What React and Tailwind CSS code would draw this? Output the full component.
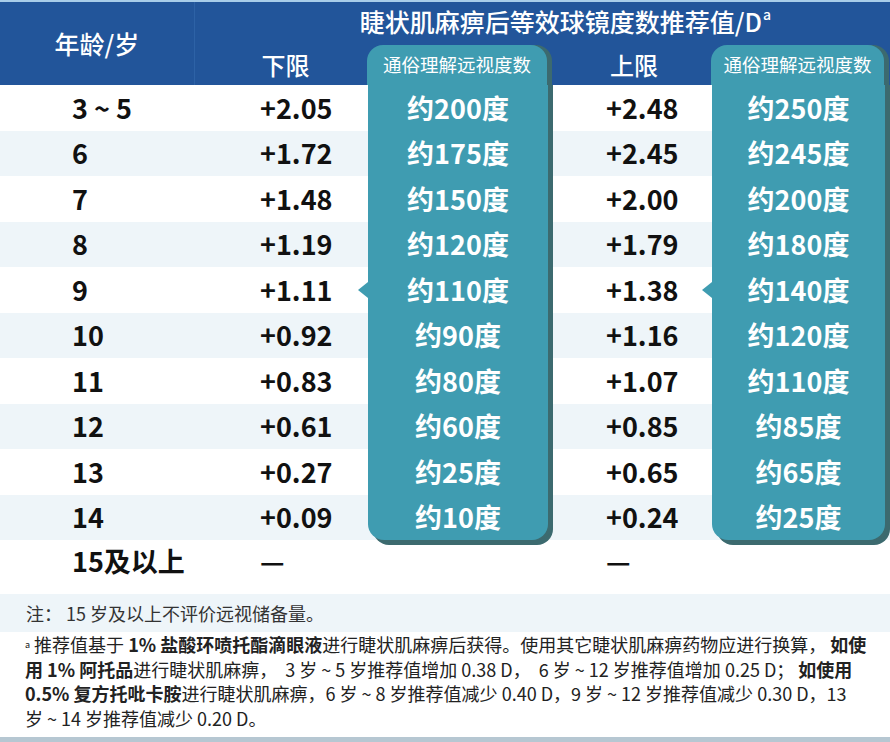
import React from 'react';

const ROWS = [
  ['3 ~ 5', '+2.05', '约200度', '+2.48', '约250度'],
  ['6', '+1.72', '约175度', '+2.45', '约245度'],
  ['7', '+1.48', '约150度', '+2.00', '约200度'],
  ['8', '+1.19', '约120度', '+1.79', '约180度'],
  ['9', '+1.11', '约110度', '+1.38', '约140度'],
  ['10', '+0.92', '约90度', '+1.16', '约120度'],
  ['11', '+0.83', '约80度', '+1.07', '约110度'],
  ['12', '+0.61', '约60度', '+0.85', '约85度'],
  ['13', '+0.27', '约25度', '+0.65', '约65度'],
  ['14', '+0.09', '约10度', '+0.24', '约25度'],
];

function BoxCell({ value, width, last, pointer }) {
  return (
    <div
      className={`relative flex items-center justify-center bg-[#3f9cb1] text-white text-[27px] font-bold ${width} ${
        last
          ? 'rounded-b-2xl shadow-[5px_0_0_#3c6a6f,5px_5px_0_#3c6a6f]'
          : 'shadow-[5px_0_0_#3c6a6f]'
      }`}
    >
      {pointer && (
        <span className="absolute left-[-10px] top-1/2 -translate-y-1/2 w-0 h-0 border-y-[8px] border-y-transparent border-r-[10px] border-r-[#3f9cb1]" />
      )}
      {value}
    </div>
  );
}

export default function App() {
  return (
    <div className="w-[890px] h-[742px] bg-white border-t-2 border-[#a8cde9] font-['Noto_Sans_CJK_SC','Noto_Sans',sans-serif] text-[#111] overflow-hidden">
      {/* Header */}
      <div className="flex bg-[#22559a] text-white">
        <div className="w-[195px] h-[83px] flex items-center justify-center border-r border-[#2d62a6] text-[25px] font-medium">
          年龄/岁
        </div>
        <div className="flex-1">
          <div className="h-[43px] flex items-center justify-center pl-[46px] pb-1 text-[25px] font-medium whitespace-nowrap">
            睫状肌麻痹后等效球镜度数推荐值/D<sup className="text-[14px] ml-[1px] -top-[8px]">a</sup>
          </div>
          <div className="h-[40px] flex">
            <div className="w-[172px] flex items-center justify-center pl-[9px] text-[24px] font-medium">下限</div>
            <div className="w-[180px] flex items-center justify-center bg-[#3f9cb1] rounded-t-2xl shadow-[5px_0_0_#3c6a6f] text-[18.5px]">
              通俗理解远视度数
            </div>
            <div className="w-[164px] flex items-center justify-center pl-[10px] text-[24px] font-medium">上限</div>
            <div className="w-[173px] flex items-center justify-center bg-[#3f9cb1] rounded-t-2xl shadow-[5px_0_0_#3c6a6f] text-[18.5px]">
              通俗理解远视度数
            </div>
          </div>
        </div>
      </div>

      {/* Body */}
      <div>
        {ROWS.map((r, i) => (
          <div key={i} className={`flex ${i % 2 ? 'h-[45px] bg-[#eef5f9]' : 'h-[46px] bg-white'}`}>
            <div className="w-[195px] flex items-center pl-[72px] text-[27px] font-bold">{r[0]}</div>
            <div className="w-[173px] flex items-center pl-[65px] text-[27px] font-bold">{r[1]}</div>
            <BoxCell value={r[2]} width="w-[180px]" last={i === ROWS.length - 1} pointer={i === 4} />
            <div className="w-[164px] flex items-center pl-[58px] text-[27px] font-bold">{r[3]}</div>
            <BoxCell value={r[4]} width="w-[173px]" last={i === ROWS.length - 1} pointer={i === 4} />
          </div>
        ))}
        <div className="flex h-[54px] pb-[12px] bg-white">
          <div className="w-[195px] flex items-center pl-[72px] text-[27px] font-bold">15及以上</div>
          <div className="w-[173px] flex items-center pl-[65px] text-[27px] font-bold">—</div>
          <div className="w-[180px]" />
          <div className="w-[164px] flex items-center pl-[58px] text-[27px] font-bold">—</div>
        </div>
      </div>

      {/* Notes */}
      <div className="h-[38px] bg-[#eef5f9] flex items-center pl-[26px] text-[18px] text-[#333]">
        注：&nbsp;15 岁及以上不评价远视储备量。
      </div>
      <div className="h-[105px] pl-[25px] text-[18px] leading-[24.5px] text-[#222] whitespace-nowrap">
        <div>
          <sup className="text-[9px]">a</sup> 推荐值基于 <b className="font-bold">1% 盐酸环喷托酯滴眼液</b>进行睫状肌麻痹后获得。使用其它睫状肌麻痹药物应进行换算，&nbsp;<b className="font-bold">如使</b>
        </div>
        <div>
          <b className="font-bold">用 1% 阿托品</b>进行睫状肌麻痹，&nbsp; 3 岁 ~ 5 岁推荐值增加 0.38 D，&nbsp; 6 岁 ~ 12 岁推荐值增加 0.25 D；&nbsp;<b className="font-bold">如使用</b>
        </div>
        <div>
          <b className="font-bold">0.5% 复方托吡卡胺</b>进行睫状肌麻痹，6 岁 ~ 8 岁推荐值减少 0.40 D，9 岁 ~ 12 岁推荐值减少 0.30 D，13
        </div>
        <div>岁 ~ 14 岁推荐值减少 0.20 D。</div>
      </div>
      <div className="h-[7px] bg-[#b6c7d2]" />
    </div>
  );
}
